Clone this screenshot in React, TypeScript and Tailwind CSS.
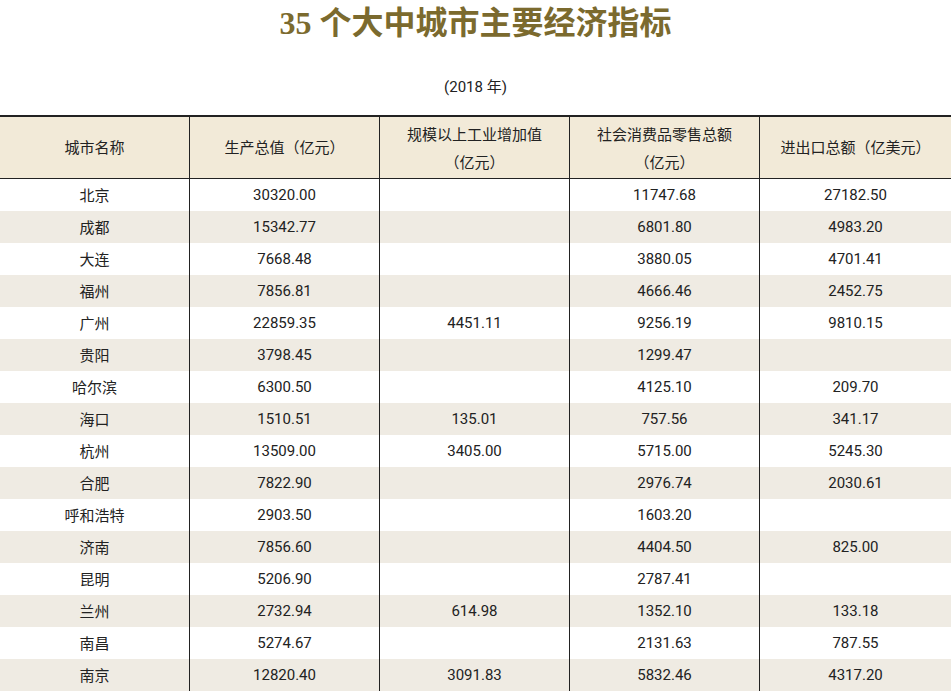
const rows: [string, string, string, string, string][] = [
  ["北京", "30320.00", "", "11747.68", "27182.50"],
  ["成都", "15342.77", "", "6801.80", "4983.20"],
  ["大连", "7668.48", "", "3880.05", "4701.41"],
  ["福州", "7856.81", "", "4666.46", "2452.75"],
  ["广州", "22859.35", "4451.11", "9256.19", "9810.15"],
  ["贵阳", "3798.45", "", "1299.47", ""],
  ["哈尔滨", "6300.50", "", "4125.10", "209.70"],
  ["海口", "1510.51", "135.01", "757.56", "341.17"],
  ["杭州", "13509.00", "3405.00", "5715.00", "5245.30"],
  ["合肥", "7822.90", "", "2976.74", "2030.61"],
  ["呼和浩特", "2903.50", "", "1603.20", ""],
  ["济南", "7856.60", "", "4404.50", "825.00"],
  ["昆明", "5206.90", "", "2787.41", ""],
  ["兰州", "2732.94", "614.98", "1352.10", "133.18"],
  ["南昌", "5274.67", "", "2131.63", "787.55"],
  ["南京", "12820.40", "3091.83", "5832.46", "4317.20"],
];
const cjk = { fontFamily: '"Noto Sans CJK SC", sans-serif' };
const num = { fontFamily: 'Roboto, "Noto Sans CJK SC", sans-serif' };
export default function App() {
  return (
    <div className="w-[951px] h-[695px] overflow-hidden bg-white text-[#222]">
      <h1 className="text-center text-[32px] font-bold text-[#7b6a2e] h-[46px] leading-[46px]" style={{ fontFamily: '"Liberation Serif", "Noto Sans CJK SC", serif' }}>35 个大中城市主要经济指标</h1>
      <div className="text-center text-[15px] h-[69px] pt-[30px]" style={num}>(2018 年)</div>
      <div className="border-t-2 border-[#222]">
        <div className="grid grid-cols-[190px_190px_190px_190px_191px] h-[62px] bg-[#f2ead8] border-b border-[#222] text-[15px]" style={cjk}>
          <div className="flex items-center justify-center border-r border-[#222]">城市名称</div>
          <div className="flex items-center justify-center border-r border-[#222]">生产总值（亿元）</div>
          <div className="flex flex-col items-center justify-center border-r border-[#222] leading-[28px]"><span>规模以上工业增加值</span><span>（亿元）</span></div>
          <div className="flex flex-col items-center justify-center border-r border-[#222] leading-[28px]"><span>社会消费品零售总额</span><span>（亿元）</span></div>
          <div className="flex items-center justify-center">进出口总额（亿美元）</div>
        </div>
        {rows.map((r, i) => (
          <div key={i} className={`grid grid-cols-[190px_190px_190px_190px_191px] h-[32px] text-[15px] ${i % 2 ? "bg-[#efebe3]" : "bg-white"}`}>
            {r.map((c, j) => (
              <div key={j} className={`flex items-center justify-center ${j < 4 ? "border-r border-[#222]" : ""}`} style={j === 0 ? cjk : num}>{c}</div>
            ))}
          </div>
        ))}
      </div>
    </div>
  );
}
